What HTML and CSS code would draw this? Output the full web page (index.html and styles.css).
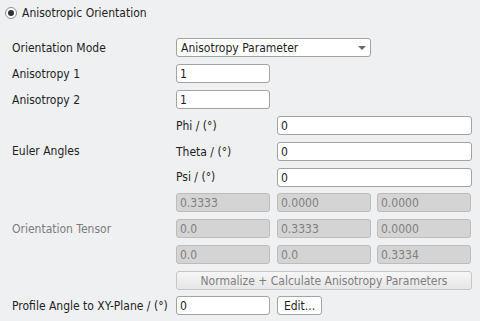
FILE: index.html
```html
<!DOCTYPE html>
<html lang="en">
<head>
    <meta charset="UTF-8">
    <title>Anisotropic Orientation</title>
    <link rel="stylesheet" href="styles.css">
</head>
<body>
    <div class="panel">
        <div class="header">
            <span class="radio"><span class="dot"></span></span>
            <span>Anisotropic Orientation</span>
        </div>

        <div class="form">
            <div class="label">Orientation Mode</div>
            <div class="select span-2">
                <span>Anisotropy Parameter</span>
                <span class="arrow"></span>
            </div>

            <div class="label">Anisotropy 1</div>
            <div class="field">1</div>

            <div class="label">Anisotropy 2</div>
            <div class="field">1</div>

            <div class="label euler">Euler Angles</div>
            <div class="sublabel">Phi / (°)</div>
            <div class="field wide span-2">0</div>
            <div class="sublabel">Theta / (°)</div>
            <div class="field wide span-2">0</div>
            <div class="sublabel">Psi / (°)</div>
            <div class="field wide span-2">0</div>

            <div class="label muted tensor">Orientation Tensor</div>
            <div class="field off">0.3333</div>
            <div class="field off">0.0000</div>
            <div class="field off">0.0000</div>
            <div class="field off">0.0</div>
            <div class="field off">0.3333</div>
            <div class="field off">0.0000</div>
            <div class="field off">0.0</div>
            <div class="field off">0.0</div>
            <div class="field off">0.3334</div>

            <div class="label"></div>
            <div class="button off span-3">Normalize + Calculate Anisotropy Parameters</div>

            <div class="label">Profile Angle to XY-Plane / (°)</div>
            <div class="field">0</div>
            <div class="button edit">Edit...</div>
        </div>
    </div>
</body>
</html>
```

FILE: styles.css
```css
body {
    margin: 0;
    background: #eff0f1;
    color: #1e1e1e;
    font-family: "DejaVu Sans Condensed", "DejaVu Sans", sans-serif;
    font-size: 12px;
    width: 480px;
    height: 321px;
    overflow: hidden;
}

.panel {
    padding: 5px 8px 0 5px;
}

/* Section header with radio */
.header {
    display: flex;
    align-items: center;
    gap: 5px;
    height: 16px;
}

.radio {
    width: 10px;
    height: 10px;
    border: 1px solid #8c8c8c;
    border-radius: 50%;
    background: #fff;
    display: flex;
    align-items: center;
    justify-content: center;
}

.radio .dot {
    width: 6px;
    height: 6px;
    border-radius: 50%;
    background: #333;
}

/* Form grid */
.form {
    display: grid;
    grid-template-columns: 164px 101px 100px 95px;
    grid-template-rows: repeat(5, 19px) 18px 19px 19px 19px 18px 19px;
    row-gap: 7px;
    margin-top: 17px;
    padding-left: 7px;
}

.label {
    grid-column: 1;
    display: flex;
    align-items: center;
    white-space: nowrap;
}

.label.muted {
    color: #7c7c7c;
}

.euler {
    grid-row: 4 / span 3;
}

.tensor {
    grid-row: 7 / span 3;
}

.sublabel {
    grid-column: 2;
    display: flex;
    align-items: center;
}

.span-2 {
    grid-column: span 2;
}

.span-3 {
    grid-column: span 3;
}

.field {
    box-sizing: border-box;
    width: 94px;
    height: 19px;
    background: #fff;
    border: 1px solid #a3a3a3;
    border-radius: 3px;
    padding-left: 3px;
    display: flex;
    align-items: center;
}

.field.wide {
    width: 195px;
}

.field.off {
    background: #d4d4d4;
    border-color: #bcbcbc;
    color: #808080;
}

.select {
    box-sizing: border-box;
    width: 195px;
    height: 19px;
    background: #fff;
    border: 1px solid #a3a3a3;
    border-radius: 3px;
    padding: 0 6px 0 4px;
    display: flex;
    align-items: center;
    justify-content: space-between;
}

.arrow {
    width: 0;
    height: 0;
    border-left: 4px solid transparent;
    border-right: 4px solid transparent;
    border-top: 4px solid #6a6a6a;
    margin-right: -2px;
}

.button {
    box-sizing: border-box;
    height: 19px;
    border: 1px solid #c6c6c6;
    border-radius: 3px;
    background: linear-gradient(#f6f6f6, #e6e6e6);
    display: flex;
    align-items: center;
    justify-content: center;
}

.button.off {
    width: 296px;
    color: #7e7e7e;
}

.button.edit {
    width: 45px;
    background: #fff;
    border-color: #a3a3a3;
    color: #1e1e1e;
}
```
